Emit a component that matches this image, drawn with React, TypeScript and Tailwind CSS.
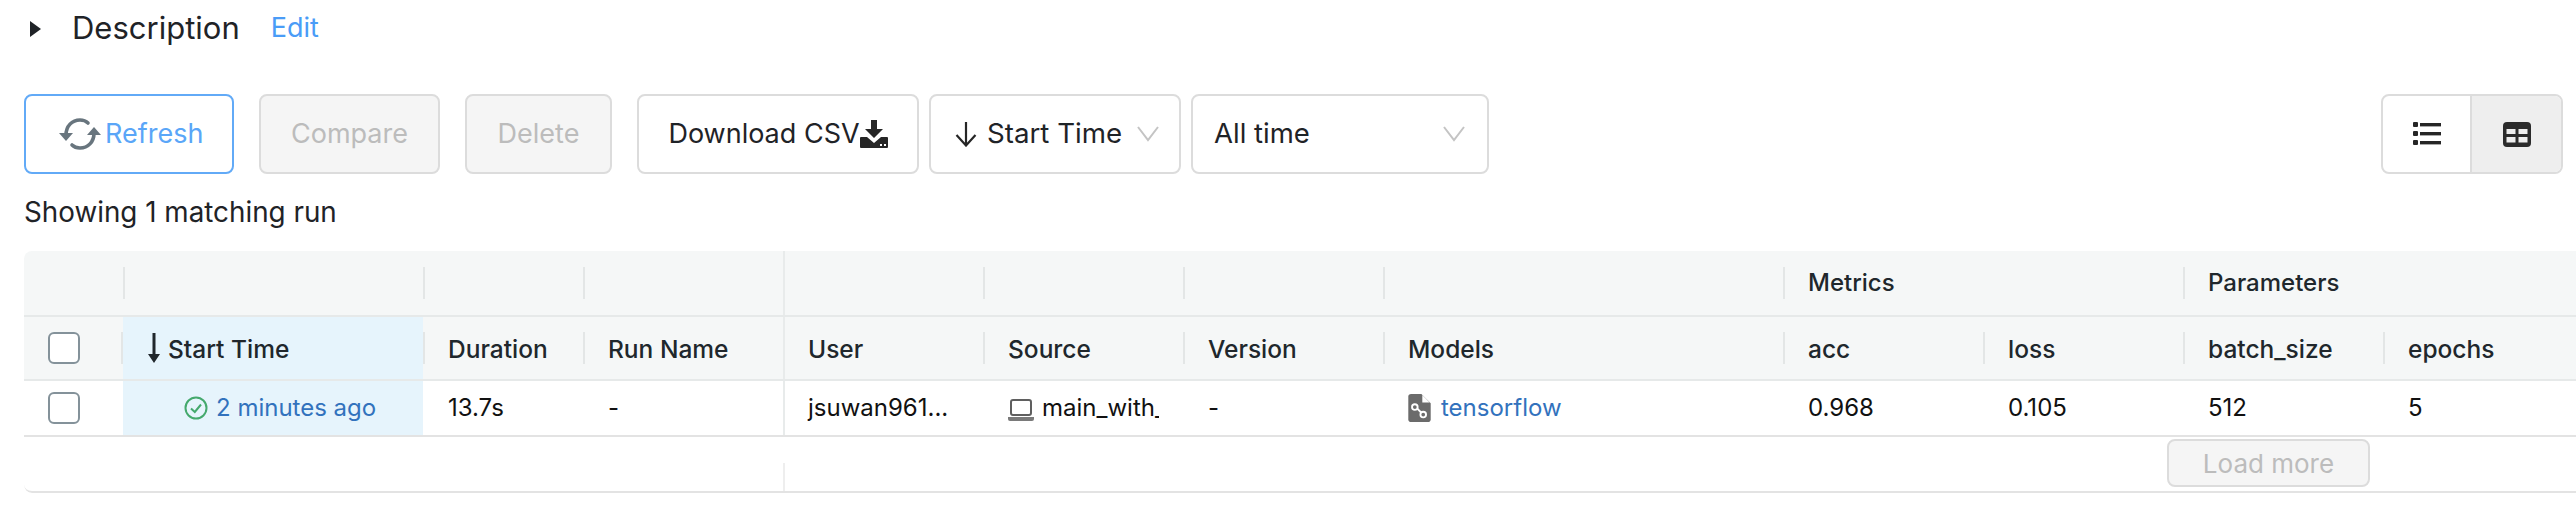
import React from 'react';

const FONT = "font-['Inter','Liberation_Sans',sans-serif]";

function RefreshIcon() {
  return (
    <svg width="42" height="32" viewBox="0 0 42 32" fill="none" className="shrink-0">
      <path d="M7 17 C7 8 13 2 21 2 C24 2 27 3 29 5" stroke="#68757e" strokeWidth="3.6" strokeLinecap="round" />
      <path d="M0 15 H14 L7 23 Z" fill="#68757e" />
      <path d="M35 15 C35 24 29 30 21 30 C18 30 15 29 13 27" stroke="#68757e" strokeWidth="3.6" strokeLinecap="round" />
      <path d="M28 17 H42 L35 9 Z" fill="#68757e" />
    </svg>
  );
}

function DownloadIcon() {
  return (
    <svg width="28" height="28" viewBox="0 0 28 28" className="shrink-0">
      <path d="M11 0 H17 V9 H23 L14 18 L5 9 H11 Z" fill="#262626" />
      <path d="M1 17 H7 L14 23 L21 17 H27 Q28 17 28 18 V27 Q28 28 27 28 H1 Q0 28 0 27 V18 Q0 17 1 17 Z" fill="#262626" />
      <rect x="20" y="24" width="2" height="2" fill="#fff" />
      <rect x="24" y="24" width="2" height="2" fill="#fff" />
    </svg>
  );
}

function Chevron() {
  return (
    <svg width="22" height="16" viewBox="0 0 22 16" fill="none" className="shrink-0">
      <path d="M1 1 L11 14 L21 1" stroke="#c4c4c4" strokeWidth="2" />
    </svg>
  );
}

function ThinArrow() {
  return (
    <svg width="22" height="26" viewBox="0 0 22 26" fill="none" className="shrink-0">
      <path d="M11 1 V24 M1.5 14 L11 24.5 L20.5 14" stroke="#262626" strokeWidth="2.2" />
    </svg>
  );
}

function ListIcon() {
  return (
    <svg width="28" height="24" viewBox="0 0 28 24" fill="#262626">
      <rect x="0" y="0" width="5" height="5" rx="1" />
      <rect x="7" y="1" width="21" height="3.4" />
      <rect x="0" y="9" width="5" height="5" rx="1" />
      <rect x="7" y="10" width="21" height="3.4" />
      <rect x="0" y="18" width="5" height="5" rx="1" />
      <rect x="7" y="19" width="21" height="3.4" />
    </svg>
  );
}

function TableIcon() {
  return (
    <svg width="28" height="25" viewBox="0 0 28 25">
      <rect width="28" height="25" rx="4" fill="#2b2b2b" />
      <rect x="3.5" y="7" width="9" height="5" fill="#eee" />
      <rect x="15.5" y="7" width="9" height="5" fill="#eee" />
      <rect x="3.5" y="15" width="9" height="5.5" fill="#eee" />
      <rect x="15.5" y="15" width="9" height="5.5" fill="#eee" />
    </svg>
  );
}

function LaptopIcon() {
  return (
    <svg width="26" height="22" viewBox="0 0 26 22" fill="none" className="shrink-0 mt-[4px]">
      <rect x="3" y="1" width="20" height="15" rx="2" stroke="#5f5f5f" strokeWidth="2" />
      <path d="M0 18 H26 V20 Q26 22 24 22 H2 Q0 22 0 20 Z" fill="#7a7a7a" />
    </svg>
  );
}

function ModelIcon() {
  return (
    <svg width="23" height="28" viewBox="0 0 24 30" className="shrink-0">
      <path d="M3 0 H14 L24 10 V27 Q24 30 21 30 H3 Q0 30 0 27 V3 Q0 0 3 0 Z" fill="#6b6b6b" />
      <path d="M15 1 L23 9 H15 Z" fill="#fff" />
      <path d="M8 14 L16 22" stroke="#fff" strokeWidth="2" />
      <circle cx="7" cy="14" r="3" fill="#6b6b6b" stroke="#fff" strokeWidth="2" />
      <circle cx="16" cy="22" r="3" fill="#6b6b6b" stroke="#fff" strokeWidth="2" />
    </svg>
  );
}

function CheckCircle() {
  return (
    <svg width="24" height="24" viewBox="0 0 24 24" fill="none" className="shrink-0">
      <circle cx="12" cy="12" r="10.5" stroke="#45a96d" strokeWidth="2" />
      <path d="M7 12.5 L10.8 16 L17 8.5" stroke="#45a96d" strokeWidth="2" />
    </svg>
  );
}

function Checkbox() {
  return <div className="w-8 h-8 rounded-[6px] border-2 border-[#84929a] bg-white" />;
}

function Tick() {
  return <div className="w-[2px] h-8 bg-[#e3e6e6] shrink-0" />;
}

// column widths, left to right
const cols = [
  { w: 'w-[99px]', label: '' },
  { w: 'w-[300px]', label: 'Start Time' },
  { w: 'w-[160px]', label: 'Duration' },
  { w: 'w-[200px]', label: 'Run Name' },
  { w: 'w-[200px]', label: 'User' },
  { w: 'w-[200px]', label: 'Source' },
  { w: 'w-[200px]', label: 'Version' },
  { w: 'w-[400px]', label: 'Models' },
  { w: 'w-[200px]', label: 'acc' },
  { w: 'w-[200px]', label: 'loss' },
  { w: 'w-[200px]', label: 'batch_size' },
  { w: 'w-[200px]', label: 'epochs' },
];

const groups = [
  { w: 'w-[99px]', label: '' },
  { w: 'w-[300px]', label: '' },
  { w: 'w-[160px]', label: '' },
  { w: 'w-[200px]', label: '' },
  { w: 'w-[200px]', label: '' },
  { w: 'w-[200px]', label: '' },
  { w: 'w-[200px]', label: '' },
  { w: 'w-[400px]', label: '' },
  { w: 'w-[400px]', label: 'Metrics' },
  { w: 'w-[400px]', label: 'Parameters' },
];

function Cell({ w, children, divider }: { w: string; children?: React.ReactNode; divider?: boolean }) {
  return (
    <div className={`${w} shrink-0 flex items-center h-full overflow-hidden ${divider ? 'border-l-2 border-[#e8ebeb]' : ''}`}>
      {children}
    </div>
  );
}

export default function App() {
  return (
    <div className={`${FONT} w-[2576px] h-[530px] overflow-hidden bg-white text-[#1f2327]`}>
      <div className="h-[56px] pl-[30px] flex items-center">
        <div className="w-0 h-0 border-y-[8px] border-y-transparent border-l-[11px] border-l-[#1f2327] mt-[2px]" />
        <span className="ml-[31px] text-[31px]">Description</span>
        <span className="ml-[31px] text-[27px] text-[#4a9cf7]">Edit</span>
      </div>

      <div className="mt-[38px] px-[24px] flex h-[80px]">
        <button className="w-[210px] h-full rounded-[8px] border-2 border-[#62aaf7] flex items-center pl-[33px] gap-[4px] text-[27px] text-[#5aa6f8]">
          <RefreshIcon />
          Refresh
        </button>
        <button className="ml-[25px] w-[181px] h-full rounded-[8px] border-2 border-[#dcdcdc] bg-[#f5f5f5] text-[27px] text-[#bcbcbc]">Compare</button>
        <button className="ml-[25px] w-[147px] h-full rounded-[8px] border-2 border-[#dcdcdc] bg-[#f5f5f5] text-[27px] text-[#bcbcbc]">Delete</button>
        <button className="ml-[25px] w-[282px] h-full rounded-[8px] border-2 border-[#dcdcdc] flex items-center justify-center text-[27px]">
          Download CSV
          <DownloadIcon />
        </button>
        <button className="ml-[10px] w-[252px] h-full rounded-[8px] border-2 border-[#dcdcdc] flex items-center pl-[24px] pr-[20px] text-[27.7px]">
          <ThinArrow />
          <span className="ml-[10px] flex-1 text-left">Start Time</span>
          <Chevron />
        </button>
        <button className="ml-[10px] w-[298px] h-full rounded-[8px] border-2 border-[#dcdcdc] flex items-center pl-[21px] pr-[22px] text-[27.5px]">
          <span className="flex-1 text-left">All time</span>
          <Chevron />
        </button>
        <div className="ml-auto mr-[-11px] w-[182px] h-full rounded-[8px] border-2 border-[#dcdcdc] flex overflow-hidden">
          <div className="w-[89px] flex items-center justify-center border-r-2 border-[#dcdcdc]">
            <ListIcon />
          </div>
          <div className="flex-1 flex items-center justify-center bg-[#eeeeee]">
            <TableIcon />
          </div>
        </div>
      </div>

      <div className="h-[77px] px-[24px] flex items-center text-[27.8px]">Showing 1 matching run</div>

      <div className="ml-[24px] w-[2552px] overflow-hidden rounded-l-[8px] text-[24px]">
        <div className="h-[66px] flex bg-[#f5f7f7] border-b-2 border-[#e6e9e9] font-medium text-[#20272c]">
          {groups.map((g, i) => (
            <Cell key={i} w={g.w} divider={i === 4}>
              {i > 0 && i !== 4 && <Tick />}
              {g.label && <span className="ml-[23px]">{g.label}</span>}
            </Cell>
          ))}
        </div>
        <div className="h-[64px] flex bg-[#f5f7f7] border-b-2 border-[#e6e9e9] font-medium text-[#20272c] text-[24.5px]">
          {cols.map((c, i) => {
            if (i === 0) {
              return (
                <Cell key={i} w={c.w}>
                  <div className="ml-[24px] flex-1"><Checkbox /></div>
                  <Tick />
                </Cell>
              );
            }
            if (i === 1) {
              return (
                <div key={i} className={`${c.w} shrink-0 flex items-center h-full bg-[#e6f4fc]`}>
                  <svg width="12" height="32" viewBox="0 0 12 32" className="ml-[25px] shrink-0">
                    <path d="M4.5 1 H7.5 V22 H12 L6 31 L0 22 H4.5 Z" fill="#20272c" />
                  </svg>
                  <span className="ml-[8px] mt-[2px]">Start Time</span>
                </div>
              );
            }
            return (
              <Cell key={i} w={c.w} divider={i === 4}>
                {i !== 4 && <Tick />}
                <span className="whitespace-nowrap ml-[23px] mt-[2px]">{c.label}</span>
              </Cell>
            );
          })}
        </div>
        <div className="h-[56px] flex border-b-2 border-[#e3e3e3] text-[#111]">
          <Cell w="w-[99px]"><div className="ml-[24px]"><Checkbox /></div></Cell>
          <div className="w-[300px] shrink-0 flex items-center h-full bg-[#e6f4fc] pl-[61px] gap-[8px] text-[#3272bd]">
            <CheckCircle />
            2 minutes ago
          </div>
          <Cell w="w-[160px]"><span className="ml-[25px]">13.7s</span></Cell>
          <Cell w="w-[200px]"><span className="ml-[25px]">-</span></Cell>
          <Cell w="w-[200px]" divider><span className="ml-[23px]">jsuwan961...</span></Cell>
          <Cell w="w-[200px]">
            <div className="ml-[25px] w-[151px] flex items-center gap-[8px] overflow-hidden whitespace-nowrap">
              <LaptopIcon />
              main_with_
            </div>
          </Cell>
          <Cell w="w-[200px]"><span className="ml-[25px]">-</span></Cell>
          <Cell w="w-[400px]">
            <div className="ml-[25px] flex items-center gap-[10px] text-[#3272bd]">
              <ModelIcon />
              tensorflow
            </div>
          </Cell>
          <Cell w="w-[200px]"><span className="ml-[25px]">0.968</span></Cell>
          <Cell w="w-[200px]"><span className="ml-[25px]">0.105</span></Cell>
          <Cell w="w-[200px]"><span className="ml-[25px]">512</span></Cell>
          <Cell w="w-[200px]"><span className="ml-[25px]">5</span></Cell>
        </div>
        <div className="h-[56px] flex border-b-2 border-[#e3e3e3] rounded-bl-[8px]">
          <div className="w-[759px] shrink-0" />
          <div className="w-[2px] h-7 mt-[26px] bg-[#eeeeee] shrink-0" />
          <div className="ml-[1382px] mt-[2px] w-[203px] h-[48px] rounded-[8px] border-2 border-[#dcdcdc] bg-[#f5f5f5] flex items-center justify-center text-[#bcbcbc] text-[26px]">
            Load more
          </div>
        </div>
      </div>
    </div>
  );
}
